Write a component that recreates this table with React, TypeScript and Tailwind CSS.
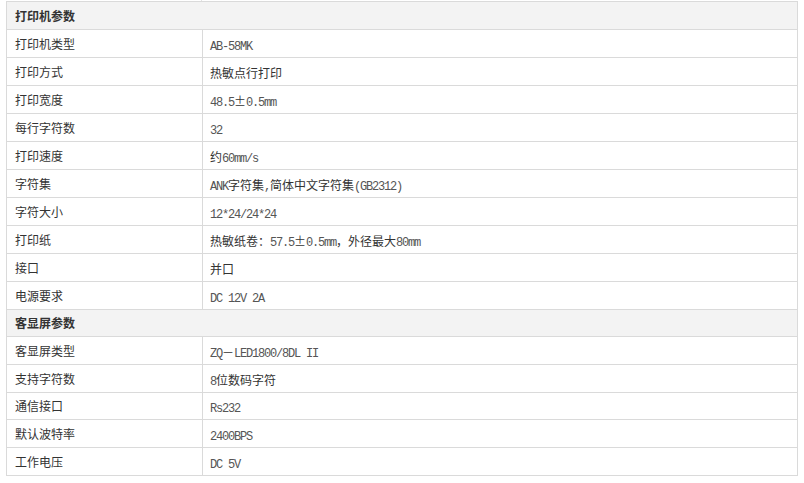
const SECTIONS = [
  {
    title: "打印机参数",
    short: false,
    rows: [
      ["打印机类型", "AB-58MK"],
      ["打印方式", "热敏点行打印"],
      ["打印宽度", "48.5±0.5mm"],
      ["每行字符数", "32"],
      ["打印速度", "约60mm/s"],
      ["字符集", "ANK字符集,简体中文字符集(GB2312)"],
      ["字符大小", "12*24/24*24"],
      ["打印纸", "热敏纸卷：57.5±0.5mm，外径最大80mm"],
      ["接口", "并口"],
      ["电源要求", "DC 12V 2A"],
    ],
  },
  {
    title: "客显屏参数",
    short: true,
    rows: [
      ["客显屏类型", "ZQ－LED1800/8DL II"],
      ["支持字符数", "8位数码字符"],
      ["通信接口", "Rs232"],
      ["默认波特率", "2400BPS"],
      ["工作电压", "DC 5V"],
    ],
  },
];

// latin runs get the narrow mono face, everything else the CJK face
function Value({ text }: { text: string }) {
  const parts = text.split(/([\x20-\x7e]+)/).filter((p) => p.length > 0);
  return (
    <span className="whitespace-pre">
      {parts.map((p, i) =>
        /^[\x20-\x7e]+$/.test(p) ? (
          <span
            key={i}
            className="font-['Liberation_Mono',monospace] text-[12px] tracking-[-1.2px] text-[#555]"
          >
            {p}
          </span>
        ) : (
          <span
            key={i}
            className="font-['Noto_Sans_CJK_SC',sans-serif] text-[12px] text-[#333]"
          >
            {p}
          </span>
        ),
      )}
    </span>
  );
}

export default function App() {
  return (
    <div className="w-[804px] h-[483px] bg-white overflow-hidden">
      <div className="ml-[6px] w-[792px]">
        {/* sliver of the row above */}
        <div className="h-[1px] flex">
          <div className="w-[196px] border-r border-[#e3e3e3]" />
        </div>
        <div className="border-t border-l border-r border-[#dadada]">
          {SECTIONS.map((s) => (
            <div key={s.title}>
              <div
                className={
                  s.short
                    ? "h-[27px] flex items-center bg-[#f3f3f3] border-b border-[#dadada] pl-[8px]"
                    : "h-[28px] flex items-center bg-[#f3f3f3] border-b border-[#dadada] pl-[8px]"
                }
              >
                <span className="font-['Noto_Sans_CJK_SC',sans-serif] text-[12px] font-bold text-[#333]">
                  {s.title}
                </span>
              </div>
              {s.rows.map(([k, v]) => (
                <div
                  key={k}
                  className={
                    k === "通信接口"
                      ? "h-[27px] flex border-b border-[#dadada]"
                      : "h-[28px] flex border-b border-[#dadada]"
                  }
                >
                  <div className="w-[196px] border-r border-[#dadada] flex items-center pl-[8px]">
                    <span className="font-['Noto_Sans_CJK_SC',sans-serif] text-[12px] text-[#333]">
                      {k}
                    </span>
                  </div>
                  <div className="flex-1 flex items-center pl-[7px]">
                    <Value text={v} />
                  </div>
                </div>
              ))}
            </div>
          ))}
        </div>
      </div>
    </div>
  );
}
